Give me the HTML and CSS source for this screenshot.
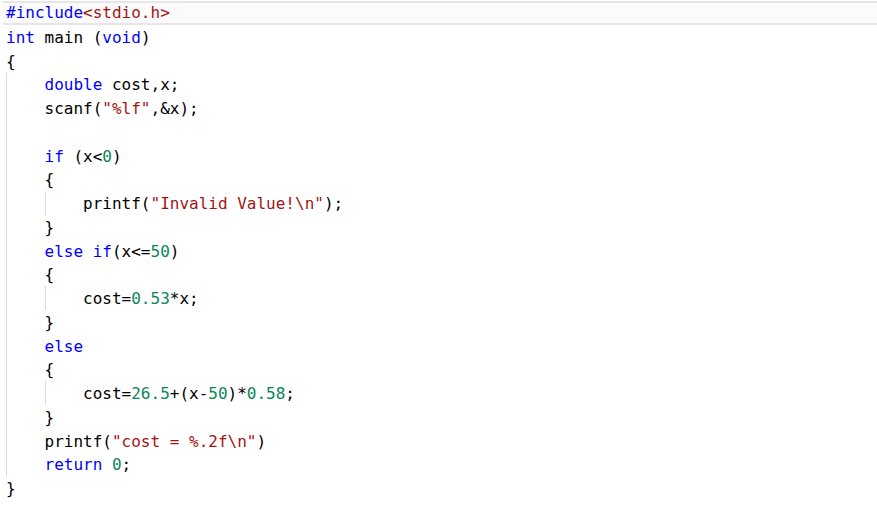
FILE: index.html
```html
<!DOCTYPE html>
<html>
<head>
<meta charset="utf-8">
<link rel="stylesheet" href="styles.css">
</head>
<body>
<div class="code">
<div class="line current"><span class="kw">#include</span><span class="str">&lt;stdio.h&gt;</span></div>
<div class="line"><span class="kw">int</span> main (<span class="kw">void</span>)</div>
<div class="line">{</div>
<div class="block">
<div class="line"><span class="kw">double</span> cost,x;</div>
<div class="line">scanf(<span class="str">"%lf"</span>,&amp;x);</div>
<div class="line"> </div>
<div class="line"><span class="kw">if</span> (x&lt;<span class="num">0</span>)</div>
<div class="line">{</div>
<div class="block"><div class="line">printf(<span class="str">"Invalid Value!\n"</span>);</div></div>
<div class="line">}</div>
<div class="line"><span class="kw">else</span> <span class="kw">if</span>(x&lt;=<span class="num">50</span>)</div>
<div class="line">{</div>
<div class="block"><div class="line">cost=<span class="num">0.53</span>*x;</div></div>
<div class="line">}</div>
<div class="line"><span class="kw">else</span></div>
<div class="line">{</div>
<div class="block"><div class="line">cost=<span class="num">26.5</span>+(x-<span class="num">50</span>)*<span class="num">0.58</span>;</div></div>
<div class="line">}</div>
<div class="line">printf(<span class="str">"cost = %.2f\n"</span>)</div>
<div class="line"><span class="kw">return</span> <span class="num">0</span>;</div>
</div>
<div class="line">}</div>
</div>
</body>
</html>
```
FILE: styles.css
```css
html, body {
  margin: 0;
  padding: 0;
  background: #ffffff;
}

.code {
  font-family: "DejaVu Sans Mono", "Liberation Mono", monospace;
  font-size: 16px;
  color: #000000;
  padding: 1px 0 0 6px;
}

.line {
  box-sizing: border-box;
  height: 23.75px;
  padding-top: 2px;
  line-height: 21.75px;
  white-space: pre;
}

.current {
  margin-left: -3px;
  padding-left: 3px;
  padding-top: 0;
  background: #fbfbfb;
  border-top: 2px solid #e6e6e6;
  border-bottom: 2px solid #e6e6e6;
  line-height: 19.75px;
}

.block {
  border-left: 1px solid #dcdcdc;
  padding-left: calc(4ch - 1px);
}

.kw { color: #0000ff; }
.str { color: #a31515; }
.num { color: #098658; }
```
